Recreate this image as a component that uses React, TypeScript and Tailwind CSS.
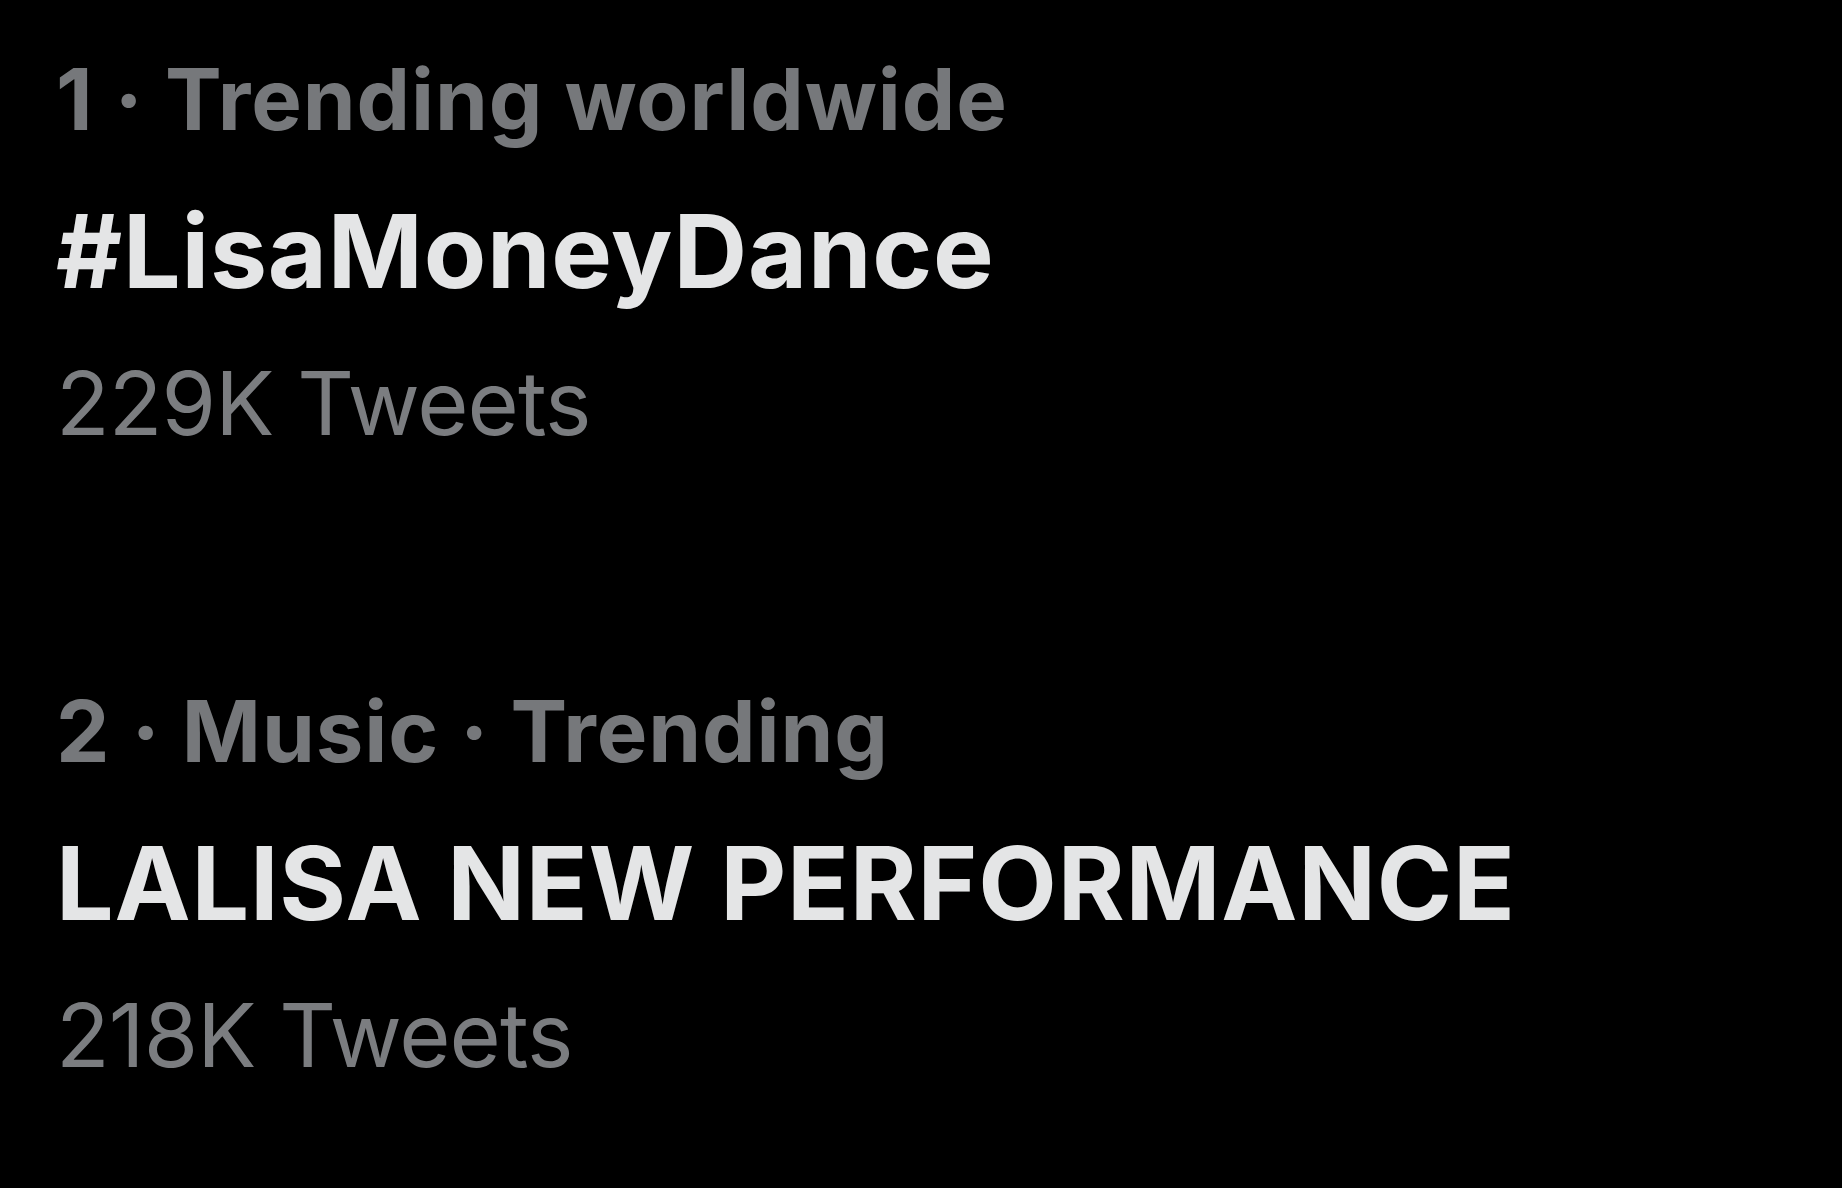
const trends = [
  { meta: "1 · Trending worldwide", name: "#LisaMoneyDance", count: "229K Tweets" },
  { meta: "2 · Music · Trending", name: "LALISA NEW PERFORMANCE", count: "218K Tweets" },
];

function TrendRow({ meta, name, count }: { meta: string; name: string; count: string }) {
  return (
    <div className="flex flex-col">
      <div className="h-[120px] text-[85px] font-bold leading-[120px] tracking-[0.9px] text-[#76787b] whitespace-nowrap">{meta}</div>
      <div className="mt-[31px] h-[120px] text-[102px] font-bold leading-[120px] tracking-[0.8px] text-[#e4e5e6] whitespace-nowrap">{name}</div>
      <div className="mt-[32px] h-[120px] text-[88px] font-normal leading-[120px] tracking-[-0.9px] text-[#7b7d80] whitespace-nowrap">{count}</div>
    </div>
  );
}

export default function App() {
  return (
    <div
      className="h-[1188px] w-[1842px] overflow-hidden bg-black pl-[56px] pt-[40px]"
      style={{ fontFamily: "Inter, 'Noto Sans', sans-serif" }}
    >
      <div className="flex flex-col gap-[209px]">
        {trends.map((t) => (
          <TrendRow key={t.name} {...t} />
        ))}
      </div>
    </div>
  );
}
